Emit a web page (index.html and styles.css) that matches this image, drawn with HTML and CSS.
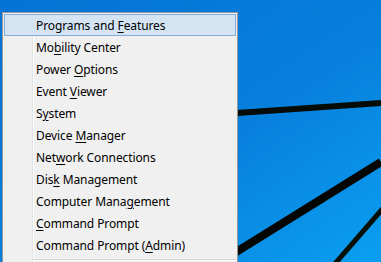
FILE: index.html
```html
<!DOCTYPE html>
<html>
<head>
<meta charset="utf-8">
<link rel="stylesheet" href="styles.css">
</head>
<body>
<svg class="wallpaper" width="381" height="262" viewBox="0 0 381 262" aria-hidden="true">
  <defs>
    <linearGradient id="bg" x1="0" y1="0" x2="1" y2="1">
      <stop offset="0" stop-color="#0573d3"/>
      <stop offset="0.55" stop-color="#077fdc"/>
      <stop offset="1" stop-color="#0b9ff0"/>
    </linearGradient>
  </defs>
  <rect width="381" height="262" fill="url(#bg)"/>
  <path d="M230 113.5 L381 103" stroke="#050b05" stroke-width="6"/>
  <path d="M225 259 L381 162" stroke="#040604" stroke-width="8"/>
  <path d="M333 266 L385 206" stroke="#061006" stroke-width="5"/>
</svg>
<div class="menu">
  <div class="item active">Programs and <u>F</u>eatures</div>
  <div class="item">Mo<u>b</u>ility Center</div>
  <div class="item">Power <u>O</u>ptions</div>
  <div class="item">Event <u>V</u>iewer</div>
  <div class="item">S<u>y</u>stem</div>
  <div class="item">Device <u>M</u>anager</div>
  <div class="item">Net<u>w</u>ork Connections</div>
  <div class="item">Dis<u>k</u> Management</div>
  <div class="item">Computer Mana<u>g</u>ement</div>
  <div class="item"><u>C</u>ommand Prompt</div>
  <div class="item">Command Prompt (<u>A</u>dmin)</div>
  <div class="sep"></div>
</div>
</body>
</html>
```
FILE: styles.css
```css
html, body {
  margin: 0;
  padding: 0;
  width: 381px;
  height: 262px;
  overflow: hidden;
}
body {
  position: relative;
  background: #0578d8;
  padding: 12px 0 0 2px;
  box-sizing: border-box;
  font-family: "Noto Sans", "Open Sans", sans-serif;
  font-size: 12px;
  color: #000;
}
.wallpaper {
  position: absolute;
  left: 0;
  top: 0;
  z-index: 0;
}
.menu {
  position: relative;
  z-index: 1;
  width: 236px;
  box-sizing: border-box;
  background: #f0f0f0 linear-gradient(to right, transparent 29px, #e2e3e3 29px, #e2e3e3 30px, #ffffff 30px, #ffffff 31px, transparent 31px);
  border: 1px solid #979797;
  padding: 1px 1px 20px 1px;
}
.item {
  height: 22px;
  line-height: 20px;
  box-sizing: border-box;
  padding: 1px 0 0 31px;
  border: 1px solid transparent;
  white-space: nowrap;
  letter-spacing: -0.1px;
}
.item u {
  text-decoration-thickness: 1px;
  text-underline-offset: 2px;
}
.item.active {
  background: #d5e4f3;
  border-color: #84acdd;
}
.sep {
  height: 1px;
  margin: 3px 0 0 29px;
  background: #d7d7d7;
  border-bottom: 1px solid #ffffff;
}
```
